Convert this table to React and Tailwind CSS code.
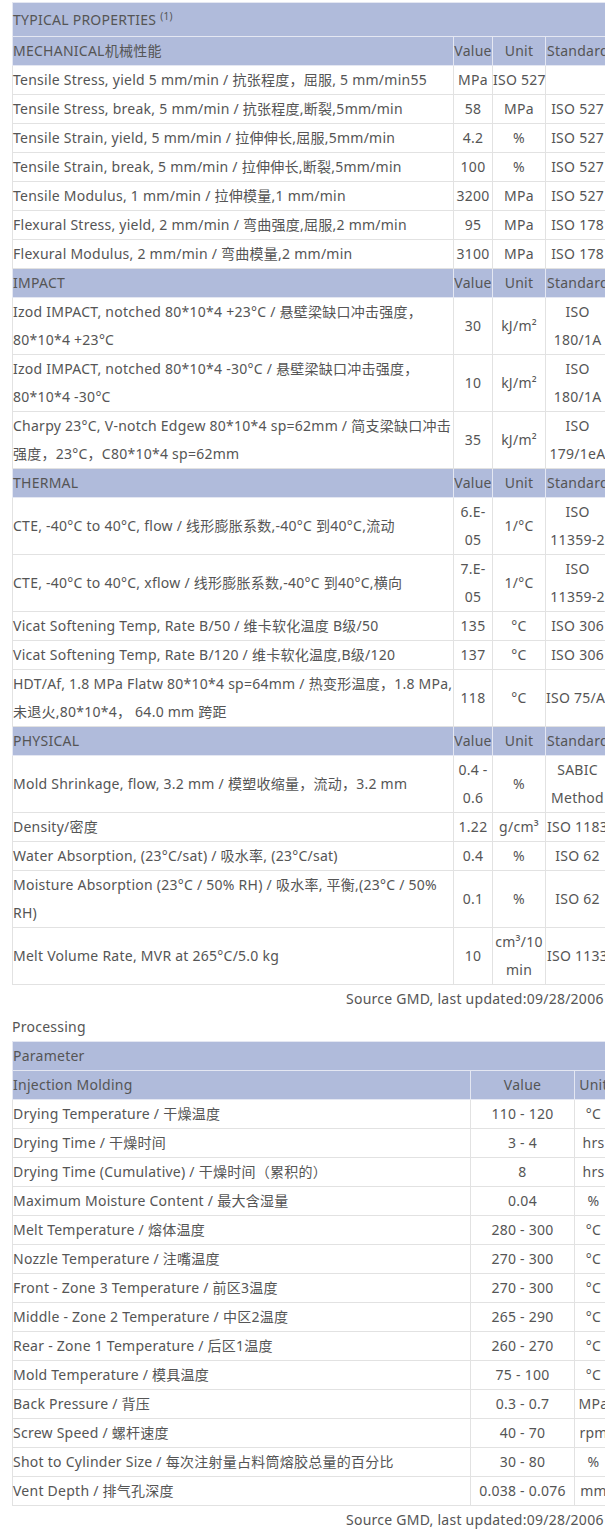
const font = { fontFamily: '"Noto Sans", "Noto Sans CJK SC", sans-serif' }

const sections = [
  {
    title: "MECHANICAL机械性能",
    rows: [
      ["Tensile Stress, yield 5 mm/min / 抗张程度，屈服, 5 mm/min55", "MPa", "ISO 527", ""],
      ["Tensile Stress, break, 5 mm/min / 抗张程度,断裂,5mm/min", "58", "MPa", "ISO 527"],
      ["Tensile Strain, yield, 5 mm/min / 拉伸伸长,屈服,5mm/min", "4.2", "%", "ISO 527"],
      ["Tensile Strain, break, 5 mm/min / 拉伸伸长,断裂,5mm/min", "100", "%", "ISO 527"],
      ["Tensile Modulus, 1 mm/min / 拉伸模量,1 mm/min", "3200", "MPa", "ISO 527"],
      ["Flexural Stress, yield, 2 mm/min / 弯曲强度,屈服,2 mm/min", "95", "MPa", "ISO 178"],
      ["Flexural Modulus, 2 mm/min / 弯曲模量,2 mm/min", "3100", "MPa", "ISO 178"],
    ],
  },
  {
    title: "IMPACT",
    rows: [
      [["Izod IMPACT, notched 80*10*4 +23°C / 悬壁梁缺口冲击强度，", "80*10*4 +23°C"], "30", "kJ/m²", ["ISO", "180/1A"]],
      [["Izod IMPACT, notched 80*10*4 -30°C / 悬壁梁缺口冲击强度，", "80*10*4 -30°C"], "10", "kJ/m²", ["ISO", "180/1A"]],
      [["Charpy 23°C, V-notch Edgew 80*10*4 sp=62mm / 简支梁缺口冲击", "强度，23°C，C80*10*4 sp=62mm"], "35", "kJ/m²", ["ISO", "179/1eA"]],
    ],
  },
  {
    title: "THERMAL",
    rows: [
      ["CTE, -40°C to 40°C, flow / 线形膨胀系数,-40°C 到40°C,流动", ["6.E-", "05"], "1/°C", ["ISO", "11359-2"]],
      ["CTE, -40°C to 40°C, xflow / 线形膨胀系数,-40°C 到40°C,横向", ["7.E-", "05"], "1/°C", ["ISO", "11359-2"]],
      ["Vicat Softening Temp, Rate B/50 / 维卡软化温度 B级/50", "135", "°C", "ISO 306"],
      ["Vicat Softening Temp, Rate B/120 / 维卡软化温度,B级/120", "137", "°C", "ISO 306"],
      [["HDT/Af, 1.8 MPa Flatw 80*10*4 sp=64mm / 热变形温度，1.8 MPa,", "未退火,80*10*4，  64.0 mm 跨距"], "118", "°C", "ISO 75/Af"],
    ],
  },
  {
    title: "PHYSICAL",
    rows: [
      ["Mold Shrinkage, flow, 3.2 mm / 模塑收缩量，流动，3.2 mm", ["0.4 -", "0.6"], "%", ["SABIC", "Method"]],
      ["Density/密度", "1.22", "g/cm³", "ISO 1183"],
      ["Water Absorption, (23°C/sat) / 吸水率, (23°C/sat)", "0.4", "%", "ISO 62"],
      [["Moisture Absorption (23°C / 50% RH) / 吸水率, 平衡,(23°C / 50%", "RH)"], "0.1", "%", "ISO 62"],
      ["Melt Volume Rate, MVR at 265°C/5.0 kg", "10", ["cm³/10", "min"], "ISO 1133"],
    ],
  },
]

const processing = [
  ["Drying Temperature / 干燥温度", "110 - 120", "°C"],
  ["Drying Time / 干燥时间", "3 - 4", "hrs"],
  ["Drying Time (Cumulative) / 干燥时间（累积的）", "8", "hrs"],
  ["Maximum Moisture Content / 最大含湿量", "0.04", "%"],
  ["Melt Temperature / 熔体温度", "280 - 300", "°C"],
  ["Nozzle Temperature / 注嘴温度", "270 - 300", "°C"],
  ["Front - Zone 3 Temperature / 前区3温度", "270 - 300", "°C"],
  ["Middle - Zone 2 Temperature / 中区2温度", "265 - 290", "°C"],
  ["Rear - Zone 1 Temperature / 后区1温度", "260 - 270", "°C"],
  ["Mold Temperature / 模具温度", "75 - 100", "°C"],
  ["Back Pressure / 背压", "0.3 - 0.7", "MPa"],
  ["Screw Speed / 螺杆速度", "40 - 70", "rpm"],
  ["Shot to Cylinder Size / 每次注射量占料筒熔胶总量的百分比", "30 - 80", "%"],
  ["Vent Depth / 排气孔深度", "0.038 - 0.076", "mm"],
]

function Lines({ v }) {
  if (!Array.isArray(v)) return v
  return v.map((l, i) => (
    <span key={i}>
      {i > 0 && <br />}
      {l}
    </span>
  ))
}

const head = "bg-[#b0bbdb] border border-[#e4e7f2] px-0 font-normal"
const cell = "border border-[#e2e2e2] px-0"

export default function App() {
  return (
    <div className="w-[605px] overflow-hidden bg-white text-[14px] leading-[28px] tracking-[0.25px] text-[#555]" style={font}>
      <div className="w-[614px] ml-[12px] pt-[2px]">
        {/* Typical properties */}
        <table className="w-[597px] table-fixed border-collapse border border-[#333]">
          <colgroup>
            <col className="w-[441px]" />
            <col className="w-[39px]" />
            <col className="w-[53px]" />
            <col className="w-[64px]" />
          </colgroup>
          <tbody>
            <tr className="h-[34px]">
              <td colSpan={4} className={head + " text-left"}>
                TYPICAL PROPERTIES <sup className="text-[10px]">(1)</sup>
              </td>
            </tr>
            {sections.map((s) => (
              <Section key={s.title} s={s} />
            ))}
          </tbody>
        </table>
        <div className="pl-[334px] whitespace-nowrap">Source GMD, last updated:09/28/2006</div>
        <div>Processing</div>

        {/* Processing */}
        <table className="w-[600px] table-fixed border-collapse border border-[#333]">
          <colgroup>
            <col className="w-[458px]" />
            <col className="w-[104px]" />
            <col className="w-[38px]" />
          </colgroup>
          <tbody>
            <tr>
              <td colSpan={3} className={head + " text-left"}>Parameter</td>
            </tr>
            <tr>
              <td className={head + " text-left"}>Injection Molding</td>
              <td className={head + " text-center"}>Value</td>
              <td className={head + " text-center"}>Unit</td>
            </tr>
            {processing.map((r) => (
              <tr key={r[0]}>
                <td className={cell + " whitespace-nowrap"}>{r[0]}</td>
                <td className={cell + " text-center"}>{r[1]}</td>
                <td className={cell + " text-center whitespace-nowrap"}>{r[2]}</td>
              </tr>
            ))}
          </tbody>
        </table>
        <div className="pl-[334px] whitespace-nowrap">Source GMD, last updated:09/28/2006</div>
      </div>
    </div>
  )
}

function Section({ s }) {
  return (
    <>
      <tr>
        <td className={head + " text-left"}>{s.title}</td>
        <td className={head + " text-center"}>Value</td>
        <td className={head + " text-center"}>Unit</td>
        <td className={head + " text-left pl-[1px] whitespace-nowrap"}>Standard</td>
      </tr>
      {s.rows.map((r, i) => (
        <tr key={i}>
          <td className={cell + " whitespace-nowrap"}><Lines v={r[0]} /></td>
          <td className={cell + " text-center"}><Lines v={r[1]} /></td>
          <td className={cell + " text-center whitespace-nowrap"}><Lines v={r[2]} /></td>
          <td className={cell + " text-center whitespace-nowrap"}><Lines v={r[3]} /></td>
        </tr>
      ))}
    </>
  )
}
